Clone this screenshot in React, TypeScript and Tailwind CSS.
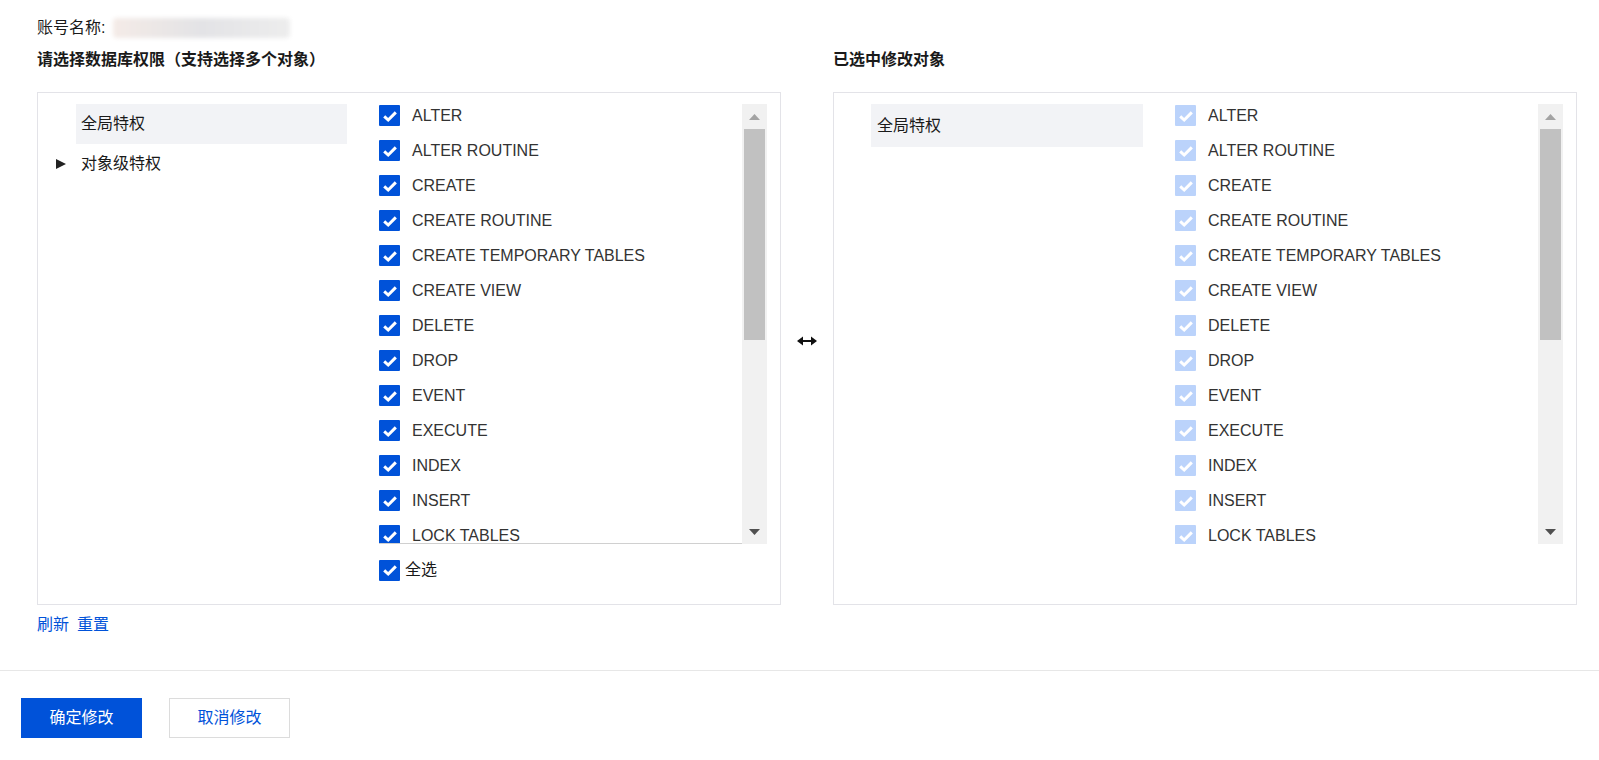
import React from 'react';

const PRIVS = [
  'ALTER',
  'ALTER ROUTINE',
  'CREATE',
  'CREATE ROUTINE',
  'CREATE TEMPORARY TABLES',
  'CREATE VIEW',
  'DELETE',
  'DROP',
  'EVENT',
  'EXECUTE',
  'INDEX',
  'INSERT',
  'LOCK TABLES',
];

function Check({ light = false }: { light?: boolean }) {
  return (
    <span
      className={`flex-shrink-0 w-[21px] h-[21px] rounded-[1px] flex items-center justify-center ${
        light ? 'bg-[#bbd3fb]' : 'bg-[#0052d9]'
      }`}
    >
      <svg width="16" height="16" viewBox="0 0 16 16">
        <polyline
          points="2.2,8.4 6.2,12 13.8,4.4"
          fill="none"
          stroke="#fff"
          strokeWidth="3"
          strokeLinecap="butt"
        />
      </svg>
    </span>
  );
}

function Scrollbar() {
  return (
    <div className="w-[25px] flex-shrink-0 bg-[#f1f1f1] flex flex-col">
      {/* up */}
      <div className="h-[25px] flex items-center justify-center">
        <svg width="11" height="6" viewBox="0 0 11 6">
          <polygon points="0,6 5.5,0 11,6" fill="#a3a3a3" />
        </svg>
      </div>
      {/* thumb */}
      <div className="mx-[2px] h-[211px] bg-[#c1c1c1]" />
      <div className="flex-1" />
      {/* down */}
      <div className="h-[25px] flex items-center justify-center">
        <svg width="11" height="6" viewBox="0 0 11 6">
          <polygon points="0,0 11,0 5.5,6" fill="#505050" />
        </svg>
      </div>
    </div>
  );
}

function PrivList({ light = false }: { light?: boolean }) {
  return (
    <div className="flex h-[440px]">
      <div
        className={`flex-1 overflow-hidden ${
          light ? '' : 'border-b border-[#d0d0d0] -mr-[4px]'
        }`}
      >
        {PRIVS.map((p) => (
          <div key={p} className="flex items-center h-[23px] mb-[12px]">
            <Check light={light} />
            <span className="ml-3 text-base text-[#333]">{p}</span>
          </div>
        ))}
      </div>
      <Scrollbar />
    </div>
  );
}

export default function App() {
  return (
    <div
      className="w-[1599px] h-[760px] bg-white text-[#1a1a1a] overflow-hidden"
      style={{ fontFamily: '"Liberation Sans", "Noto Sans CJK SC", sans-serif' }}
    >
      <div className="pl-[37px] pt-[16px]">
        {/* account */}
        <div className="flex items-center h-6 text-base">
          <span>账号名称:</span>
          <span className="ml-2 w-[177px] h-[20px] rounded-sm bg-gradient-to-r from-[#f4ebe7] via-[#e3e3e6] to-[#ededed] blur-[2px]" />
        </div>

        {/* titles */}
        <div className="flex mt-2 h-6 items-center text-base font-bold">
          <div className="w-[744px]">请选择数据库权限（支持选择多个对象）</div>
          <div className="w-[52px]" />
          <div className="w-[744px]">已选中修改对象</div>
        </div>

        {/* panels */}
        <div className="flex mt-5">
          {/* left panel */}
          <div className="w-[744px] h-[513px] border border-[#e3e3e8] pt-[11px] pl-[18px] pr-[13px] flex">
            <div className="w-[291px] flex-shrink-0">
              <div className="ml-5 h-10 bg-[#f2f3f6] flex items-center pl-[5px] text-base">
                全局特权
              </div>
              <div className="h-10 flex items-center text-base">
                <svg width="10" height="10" viewBox="0 0 10 10">
                  <polygon points="0,0 10,5 0,10" fill="#222" />
                </svg>
                <span className="ml-[15px]">对象级特权</span>
              </div>
            </div>
            <div className="ml-8 flex-1">
              <PrivList />
              <div className="mt-[14px] flex items-center">
                <Check />
                <span className="ml-[5px] text-base">全选</span>
              </div>
            </div>
          </div>

          {/* transfer arrow */}
          <div className="w-[52px] flex items-center justify-center pb-4">
            <svg width="20" height="10" viewBox="0 0 20 10">
              <line x1="5" y1="5" x2="15" y2="5" stroke="#111" strokeWidth="2" />
              <polygon points="0,5 6,0.5 6,9.5" fill="#111" />
              <polygon points="20,5 14,0.5 14,9.5" fill="#111" />
            </svg>
          </div>

          {/* right panel */}
          <div className="w-[744px] h-[513px] border border-[#e3e3e8] pt-[11px] pl-[37px] pr-[13px] flex">
            <div className="w-[272px] flex-shrink-0">
              <div className="h-[43px] bg-[#f2f3f6] flex items-center pl-[6px] text-base">
                全局特权
              </div>
            </div>
            <div className="ml-8 flex-1">
              <PrivList light />
            </div>
          </div>
        </div>

        {/* links */}
        <div className="mt-2 h-6 flex items-center gap-2 text-base text-[#0052d9]">
          <span>刷新</span>
          <span>重置</span>
        </div>
      </div>

      {/* footer */}
      <div className="mt-[33px] border-t border-[#e7e7e7] pt-[27px] pl-[21px] flex gap-[27px]">
        <button className="w-[121px] h-10 bg-[#0052d9] text-white text-base">确定修改</button>
        <button className="w-[121px] h-10 border border-[#dcdcdc] text-[#0052d9] text-base">
          取消修改
        </button>
      </div>
    </div>
  );
}
